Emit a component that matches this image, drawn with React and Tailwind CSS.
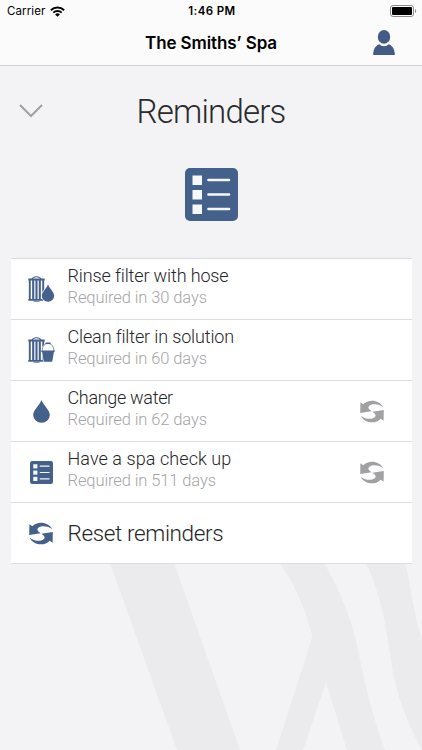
import React from "react";

const BLUE = "#44618c";

function WifiIcon() {
  return (
    <svg width="15" height="11" viewBox="0 0 15 11" fill="none" stroke="#000">
      <path d="M0.9 4.2a9.4 9.4 0 0 1 13.2 0" strokeWidth="2" />
      <path d="M3.3 6.7a6 6 0 0 1 8.4 0" strokeWidth="1.8" />
      <path d="M7.5 10.8L5.1 8.4a3.4 3.4 0 0 1 4.8 0z" fill="#000" stroke="none" />
    </svg>
  );
}

function BatteryIcon() {
  return (
    <svg width="27" height="12" viewBox="0 0 27 12">
      <rect x="0.5" y="0.5" width="23" height="11" rx="2.5" fill="none" stroke="#8b8b8b" />
      <rect x="2" y="2" width="20" height="8" rx="1" fill="#000" />
      <path d="M25 4v4c1.6-.6 1.6-3.4 0-4z" fill="#8b8b8b" />
    </svg>
  );
}

function UserIcon() {
  return (
    <svg width="22" height="25" viewBox="0 0 22 25" fill="#425b86">
      <path d="M0.2 25C0.2 19 2.6 15.6 6.2 14.3C9.2 16.8 12.8 16.8 15.8 14.3C19.4 15.6 21.8 19 21.8 25z" />
      <ellipse cx="11" cy="7" rx="6.8" ry="7.7" fill="#fbfbfb" />
      <ellipse cx="11" cy="6.9" rx="6.2" ry="6.9" />
    </svg>
  );
}

function ListIcon({ size }) {
  return (
    <svg width={size} height={size} viewBox="0 0 53 53">
      <rect width="53" height="53" rx="5" fill={BLUE} />
      <g fill="#f6f7f9">
        <rect x="7.5" y="7.5" width="9.5" height="9.5" />
        <rect x="7.5" y="22" width="9.5" height="9.5" />
        <rect x="7.5" y="36.5" width="9.5" height="9.5" />
      </g>
      <path d="M23.5 12H44M23.5 26.5H44M23.5 41H44" stroke="#f6f7f9" strokeWidth="2.7" strokeLinecap="round" />
    </svg>
  );
}

function Filter() {
  return (
    <g fill="none" stroke={BLUE}>
      <path d="M4 3C5.5 0 11.5 0 13 3" strokeWidth="1.2" />
      <path d="M0.3 3.5H16.7M0.3 23.8H16.7" strokeWidth="1.8" />
      <path d="M1.8 4V24M15.2 4V24" strokeWidth="1.9" />
      <path d="M5.2 4V24M8.5 4V24M11.8 4V24" strokeWidth="2.1" />
      <path d="M5.5 25.3H11.5" strokeWidth="0.8" />
    </g>
  );
}

function FilterDropIcon() {
  return (
    <svg width="27" height="26" viewBox="0 0 27 26">
      <Filter />
      <path
        d="M20 8.4C21.5 12.3 26.2 16 26.2 19.8A6.2 5.9 0 0 1 13.8 19.8C13.8 16 18.5 12.3 20 8.4z"
        fill={BLUE}
        stroke="#fff"
        strokeWidth="1.2"
        paintOrder="stroke"
      />
    </svg>
  );
}

function FilterBucketIcon() {
  return (
    <svg width="27" height="26" viewBox="0 0 27 26">
      <Filter />
      <path d="M13.4 13.2C13.4 4.200 26.6 4.2 26.6 13.2L24.8 26H15.2z" fill="#fff" />
      <path d="M14.3 14C13.5 4 26.5 4 25.7 14" fill="none" stroke={BLUE} strokeWidth="0.7" />
      <path d="M18 6.3H22" stroke={BLUE} strokeWidth="1.6" strokeLinecap="round" />
      <path d="M13.3 13.5H26.7V15H25.9L24.2 24.8H15.8L14.1 15H13.3z" fill={BLUE} />
    </svg>
  );
}

function DropIcon() {
  return (
    <svg width="17" height="23" viewBox="0 0 17 23" fill={BLUE}>
      <path d="M8.5 0C10.5 5.4 16.8 10 16.8 15A8.3 7.8 0 0 1 0.2 15C0.2 10 6.5 5.4 8.5 0z" />
    </svg>
  );
}

function ResetIcon({ color }) {
  const arrow =
    "M0.4 2.2L3.3 4.3C8 -1.2 19.5 -0.7 23.3 7.3C19.5 4 12 2.8 8.9 6.2C8 7.5 8.4 8.4 9.4 9.4L11.6 11.3L0.2 13z";
  return (
    <svg width="24" height="23" viewBox="0 0 24 23" fill={color}>
      <path d={arrow} />
      <path d={arrow} transform="rotate(180 12 11.5)" />
    </svg>
  );
}

const reminders = [
  { title: "Rinse filter with hose", due: "Required in 30 days", icon: <FilterDropIcon />, tracking: "tracking-[-0.13px]" },
  { title: "Clean filter in solution", due: "Required in 60 days", icon: <FilterBucketIcon />, tracking: "tracking-[-0.14px]" },
  { title: "Change water", due: "Required in 62 days", icon: <DropIcon />, reset: true, tracking: "tracking-[-0.32px]" },
  { title: "Have a spa check up", due: "Required in 511 days", icon: <ListIcon size={23} />, reset: true, tracking: "tracking-[0.07px]" },
];

function Watermark() {
  return (
    <svg className="absolute bottom-0 left-0" width="422" height="187" viewBox="0 563 422 187" fill="#ebebed">
      <path d="M110 563H174L240 750H177z" />
      <path d="M280 563H324C340 590 353 622 359 655C366 690 373 717 385 750H347L326 682L303 750H276L312.5 637C306 610 295 585 280 563z" />
      <path d="M366 563H405C411 583 412 608 422 640V750C407 722 396 695 391 661C386 626 381 594 366 563z" />
    </svg>
  );
}

export default function App() {
  return (
    <div className="relative flex h-[750px] w-[422px] flex-col overflow-hidden bg-[#f3f3f5] font-['Roboto',sans-serif]">
      <Watermark />

      {/* Status bar + navigation */}
      <header className="h-[66px] border-b border-[#d2d2d5] bg-[#fbfbfb] font-['Inter',sans-serif] text-black">
        <div className="grid h-[22px] grid-cols-3 items-center pl-[7px] pr-[5px] text-[11.5px]">
          <div className="flex items-center gap-[5px]">
            <span className="pt-px tracking-[0.1px]">Carrier</span>
            <WifiIcon />
          </div>
          <span className="pt-px text-center font-semibold tracking-[0.4px]">1:46 PM</span>
          <div className="flex justify-end">
            <BatteryIcon />
          </div>
        </div>
        <div className="grid h-[43px] grid-cols-[60px_1fr_60px] items-center">
          <span />
          <h1 className="text-center text-[17px] font-semibold tracking-[-0.1px]">The Smiths’ Spa</h1>
          <button className="-mt-[2px] ml-[11px]">
            <UserIcon />
          </button>
        </div>
      </header>

      {/* Page title */}
      <div className="grid h-[90px] grid-cols-[60px_1fr_60px] items-center text-[#2b2b2d]">
        <button className="ml-[19px]">
          <svg width="24" height="14" viewBox="0 0 24 14" fill="none" stroke="#a0a0a2" strokeWidth="2">
            <path d="M1 1L12 12L23 1" />
          </svg>
        </button>
        <h2 className="pt-0.5 text-center text-[33px] font-light tracking-[-0.8px]">Reminders</h2>
      </div>
      <div className="flex h-[102px] justify-center pt-3">
        <ListIcon size={53} />
      </div>

      <ul className="relative mx-[10.5px] border-y border-[#dcdcdf] bg-white">
        {reminders.map((item) => (
          <li key={item.title} className="flex h-[61px] items-center border-b border-[#dcdcdf]">
            <div className="flex w-[57px] justify-center pl-[4px]">{item.icon}</div>
            <div className="flex-1 pb-[4px] font-light">
              <p className={`text-[18px] leading-[22px] text-[#262628] ${item.tracking}`}>{item.title}</p>
              <p className="text-[16.5px] leading-[22px] tracking-[-0.1px] text-[#a5a5a7]">{item.due}</p>
            </div>
            {item.reset && (
              <button className="mr-[28px]">
                <ResetIcon color="#a1a1a4" />
              </button>
            )}
          </li>
        ))}
        <li className="flex h-[60px] items-center">
          <div className="flex w-[57px] justify-center pl-[4px]">
            <ResetIcon color={BLUE} />
          </div>
          <p className="pt-0.5 text-[22.5px] font-light tracking-[-0.36px] text-[#262628]">Reset reminders</p>
        </li>
      </ul>
    </div>
  );
}
